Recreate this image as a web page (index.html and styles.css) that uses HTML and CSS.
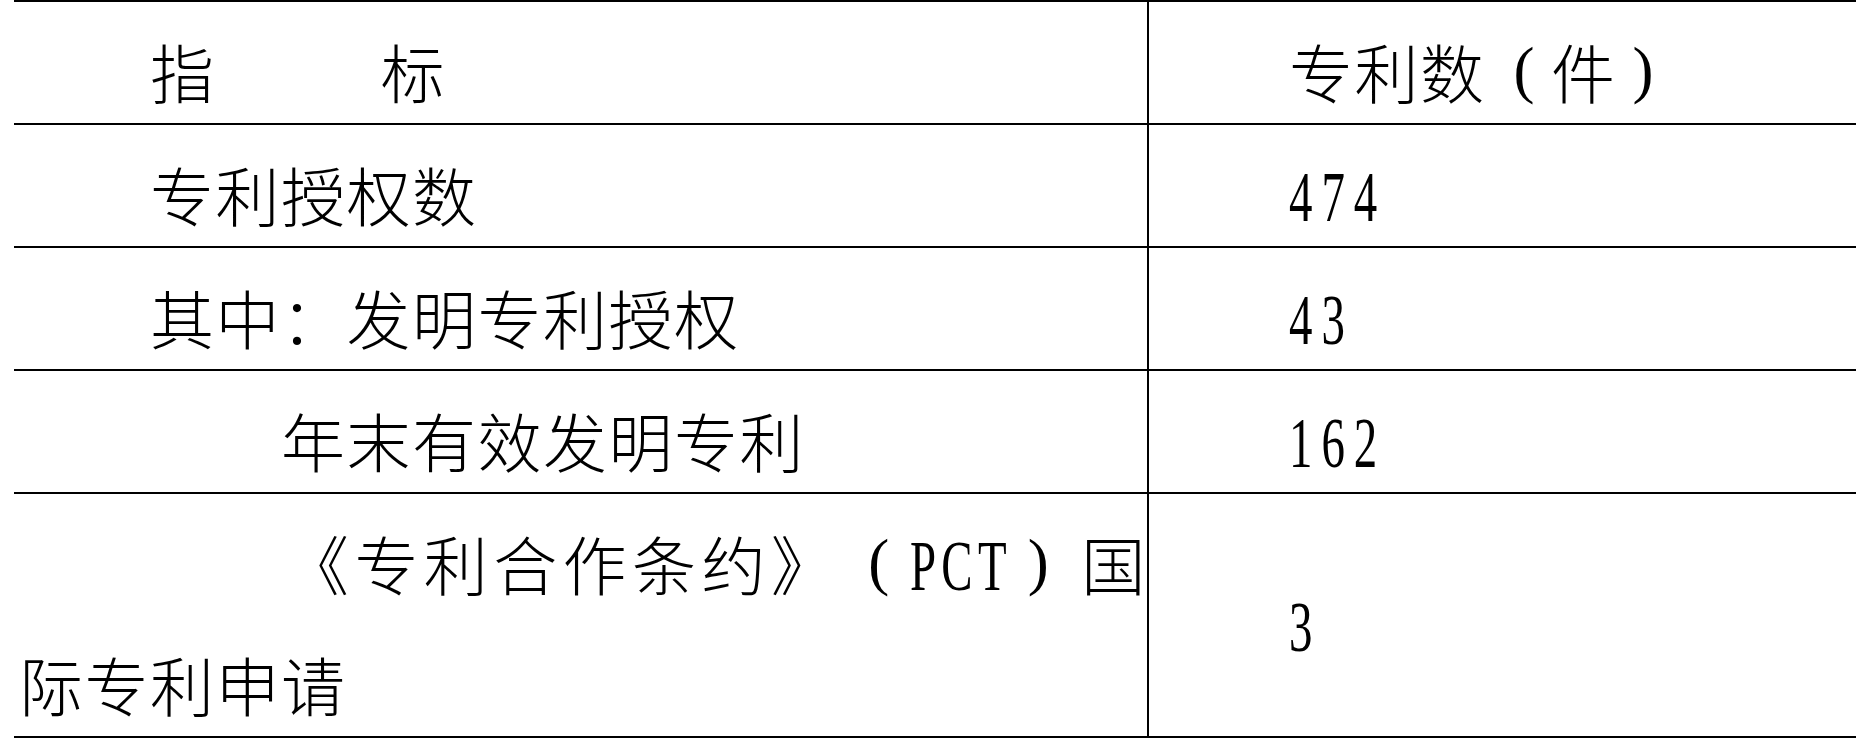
FILE: index.html
```html
<!DOCTYPE html>
<html lang="zh-CN">
<head>
<meta charset="utf-8">
<title>专利</title>
<link rel="stylesheet" href="styles.css">
</head>
<body>
<table class="stats">
  <colgroup><col class="col-label"><col class="col-value"></colgroup>
  <tr>
    <td class="label indent2"><span class="t">指<span class="gap"></span>标</span></td>
    <td class="value indent2"><span class="t">专利数<span class="paren open">(</span>件<span class="paren close">)</span></span></td>
  </tr>
  <tr>
    <td class="label indent2"><span class="t">专利授权数</span></td>
    <td class="value indent2"><span class="t"><span class="num">474</span></span></td>
  </tr>
  <tr>
    <td class="label indent2"><span class="t">其中：发明专利授权</span></td>
    <td class="value indent2"><span class="t"><span class="num">43</span></span></td>
  </tr>
  <tr>
    <td class="label indent4"><span class="t">年末有效发明专利</span></td>
    <td class="value indent2"><span class="t"><span class="num">162</span></span></td>
  </tr>
  <tr>
    <td class="label">
      <span class="line first"><span class="t">《专利合作条约》<span class="paren open">(</span><span class="num lat">PCT</span><span class="paren close">)</span>国</span></span>
      <span class="line"><span class="t">际专利申请</span></span>
    </td>
    <td class="value indent2"><span class="t"><span class="num">3</span></span></td>
  </tr>
</table>
</body>
</html>
```

FILE: styles.css
```css
html, body {
  margin: 0;
  padding: 0;
  background: #fff;
}
body {
  width: 1860px;
  height: 740px;
  overflow: hidden;
  font-family: "Noto Sans CJK SC", "Noto Sans CJK JP", sans-serif;
  font-weight: 300;
  color: #000;
  text-spacing-trim: space-all;
  font-feature-settings: "halt" 0, "palt" 0;
}
.stats {
  border-collapse: collapse;
  table-layout: fixed;
  margin-left: 14px;
  width: 1842px;
}
.col-label { width: 1134px; }
.stats td {
  --ls: 1.5px;
  border-top: 2px solid #000;
  border-bottom: 2px solid #000;
  padding: 0 7px 0 5px;
  vertical-align: middle;
  line-height: 121px;
  font-size: 64px;
  letter-spacing: var(--ls);
  white-space: nowrap;
}
.stats td.label { border-right: 2px solid #000; }
.stats td.value { padding-left: 9px; }
.indent2 { text-indent: 131px; }
.indent4 { text-indent: 262px; }
.t {
  vertical-align: -8px;
  line-height: 100px;
}
.gap {
  display: inline-block;
  width: 165px;
}
.num {
  display: inline-block;
  font-family: "Liberation Serif", serif;
  font-weight: 400;
  font-size: 71px;
  line-height: 71px;
  letter-spacing: 13.6px;
  text-indent: 0;
  transform: scaleX(0.66);
  transform-origin: 0 0;
}
.lat {
  letter-spacing: 8px;
  margin-right: -52px;
}
.paren {
  display: inline-block;
  box-sizing: border-box;
  width: 64px;
  margin-right: var(--ls);
  font-family: "Liberation Serif", serif;
  font-weight: 400;
  font-size: 63px;
  line-height: 63px;
  letter-spacing: 0;
  text-indent: 0;
  vertical-align: 7.5px;
}
.paren.open { padding-left: 28px; }
.paren.close { padding-left: 16px; }
.line {
  display: block;
  line-height: 121px;
}
.line.first {
  --ls: 5.4px;
  text-indent: 266px;
  letter-spacing: var(--ls);
}
```
